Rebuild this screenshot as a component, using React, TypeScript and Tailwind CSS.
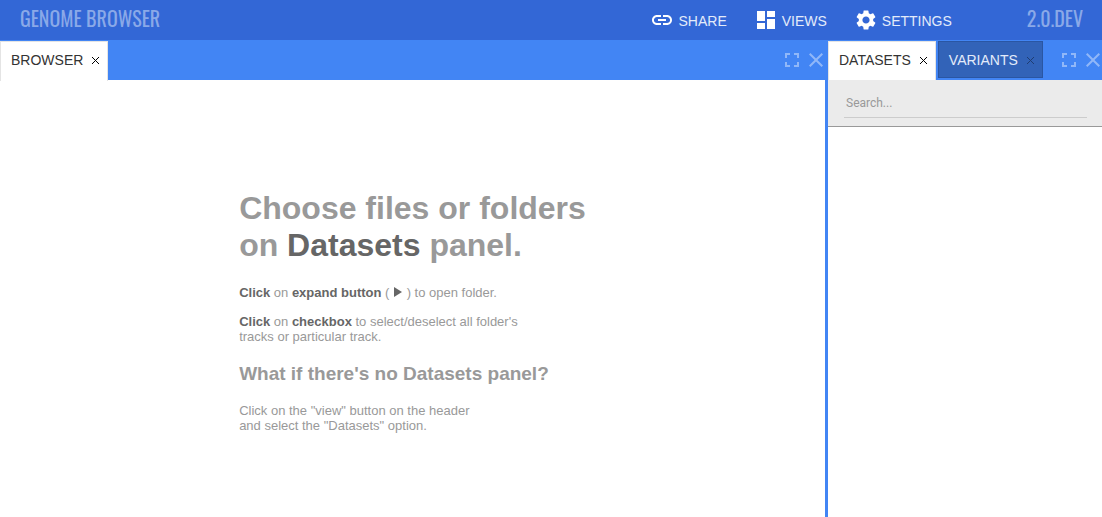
import React from "react";
import { MdDashboard, MdLink, MdSettings } from "react-icons/md";

function FullscreenIcon() {
  return (
    <svg width="14" height="14" viewBox="5 5 14 14" fill="currentColor" aria-hidden="true">
      <path d="M7 14H5v5h5v-2H7v-3zm-2-4h2V7h3V5H5v5zm12 7h-3v2h5v-5h-2v3zM14 5v2h3v3h2V5h-5z" />
    </svg>
  );
}

function CloseIcon() {
  return (
    <svg width="14" height="14" viewBox="5 5 14 14" fill="currentColor" aria-hidden="true">
      <path d="M19 6.41L17.59 5 12 10.59 6.41 5 5 6.41 10.59 12 5 17.59 6.41 19 12 13.41 17.59 19 19 17.59 13.41 12z" />
    </svg>
  );
}

function TabCloseIcon() {
  return (
    <svg width="7" height="7" viewBox="0 0 7 7" stroke="currentColor" shapeRendering="crispEdges" aria-hidden="true">
      <path d="M0 0L7 7M7 0L0 7" />
    </svg>
  );
}

function NavButton({ icon, label }: { icon: React.ReactNode; label: string }) {
  return (
    <button type="button" className="flex items-center gap-1 text-sm text-[#e3ebfa]">
      <span className="text-2xl text-white">{icon}</span>
      <span className="pt-0.5">{label}</span>
    </button>
  );
}

function Tab({ label, active }: { label: string; active: boolean }) {
  return (
    <div
      className={
        active
          ? "flex h-10 items-center gap-[9px] border border-b-0 border-[#e4e4e4] bg-white pr-2 pb-1 pl-2.5 text-[#333]"
          : "flex h-[37px] items-center gap-[9px] border border-[#2a56a3] bg-[#3263b8] pr-2 pl-2.5 text-[#e3ebfa]"
      }
    >
      <button type="button" role="tab" aria-selected={active} className="text-sm">
        {label}
      </button>
      <button
        type="button"
        aria-label={`Close ${label}`}
        className={active ? "pt-0.5 text-black" : "pt-0.5 text-[#1f3d72]"}
      >
        <TabCloseIcon />
      </button>
    </div>
  );
}

function TabStrip({ tabs }: { tabs: string[] }) {
  return (
    <div className="flex h-10 items-start bg-[#4285f4] pt-px pr-0.5">
      <div role="tablist" className="flex gap-0.5">
        {tabs.map((t, i) => (
          <Tab key={t} label={t} active={i === 0} />
        ))}
      </div>
      <div className="ml-auto flex items-center gap-2.5 pt-3 text-[#90b7f8]">
        <button type="button" aria-label="Maximize panel">
          <FullscreenIcon />
        </button>
        <button type="button" aria-label="Close panel">
          <CloseIcon />
        </button>
      </div>
    </div>
  );
}

export default function App() {
  return (
    <div className="flex min-h-screen flex-col bg-white font-['Liberation_Sans',Arial,sans-serif]">
      <header className="flex h-10 items-center bg-[#3367d6] pr-[19px] pl-5">
        <h1 className="pb-1 font-['Oswald','Liberation_Sans_Narrow',sans-serif] text-[20px] leading-6 text-[#8aa9e8]">
          GENOME BROWSER
        </h1>
        <nav className="ml-auto flex items-center gap-[27px]">
          <NavButton icon={<MdLink />} label="SHARE" />
          <NavButton icon={<MdDashboard />} label="VIEWS" />
          <NavButton icon={<MdSettings />} label="SETTINGS" />
        </nav>
        <span className="ml-[75px] pb-1 font-['Oswald','Liberation_Sans_Narrow',sans-serif] text-[20px] leading-6 text-[#8aa9e8]">
          2.0.DEV
        </span>
      </header>

      <div className="flex grow">
        <main className="flex min-w-0 grow flex-col">
          <TabStrip tabs={["BROWSER"]} />
          <section className="mx-auto pt-[110px] text-[13px] leading-[15px] text-[#999]">
            <h2 className="text-[32px] leading-[37px] font-bold">
              Choose files or folders
              <br />
              on <span className="text-[#666]">Datasets</span> panel.
            </h2>
            <p className="mt-[21px]">
              <b className="text-[#666]">Click</b> on <b className="text-[#666]">expand button</b> ({" "}
              <svg className="inline-block align-baseline" width="10" height="10" viewBox="0 0 10 10" fill="#666" role="img" aria-label="expand">
                <path d="M1 0L9 5L1 10Z" />
              </svg>{" "}
              ) to open folder.
            </p>
            <p className="mt-3.5">
              <b className="text-[#666]">Click</b> on <b className="text-[#666]">checkbox</b> to select/deselect all folder's
              <br />
              tracks or particular track.
            </p>
            <h3 className="mt-[19px] text-[19px] leading-[22px] font-bold">What if there's no Datasets panel?</h3>
            <p className="mt-[18px]">
              Click on the "view" button on the header
              <br />
              and select the "Datasets" option.
            </p>
          </section>
        </main>

        <aside className="flex w-1/4 min-w-[277px] flex-col border-l-3 border-[#4285f4]">
          <TabStrip tabs={["DATASETS", "VARIANTS"]} />
          <div className="border-b border-[#999] bg-[#ebebeb] pt-2 pr-[15px] pb-2 pl-4">
            <input
              type="text"
              aria-label="Search datasets"
              placeholder="Search..."
              className="h-[30px] w-full border-b border-[#ccc] bg-transparent px-0.5 font-['Roboto',sans-serif] text-xs text-[#333] outline-none placeholder:text-[#999]"
            />
          </div>
        </aside>
      </div>
    </div>
  );
}
